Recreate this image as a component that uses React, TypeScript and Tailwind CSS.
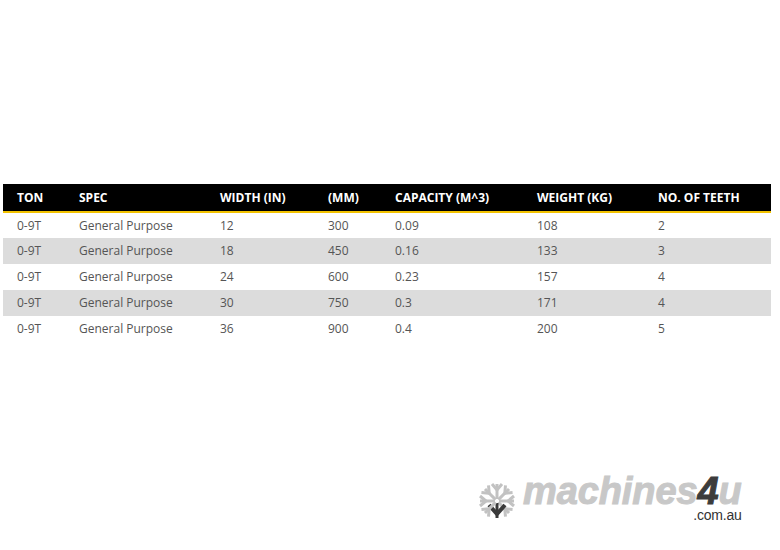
import React from 'react'

const headers = ['TON', 'SPEC', 'WIDTH (IN)', '(MM)', 'CAPACITY (M^3)', 'WEIGHT (KG)', 'NO. OF TEETH']
const widths = ['w-[62px]', 'w-[141px]', 'w-[108px]', 'w-[67px]', 'w-[142px]', 'w-[121px]', 'w-[127px]']

const rows = [
  ['0-9T', 'General Purpose', '12', '300', '0.09', '108', '2'],
  ['0-9T', 'General Purpose', '18', '450', '0.16', '133', '3'],
  ['0-9T', 'General Purpose', '24', '600', '0.23', '157', '4'],
  ['0-9T', 'General Purpose', '30', '750', '0.3', '171', '4'],
  ['0-9T', 'General Purpose', '36', '900', '0.4', '200', '5'],
]

// snowflake mark: 8 spokes with inward chevrons, the bottom one dark
const Star = () => (
  <svg width="38" height="40" viewBox="-19 -20 38 40">
    {[0, 45, 90, 135, 180, 225, 270, 315].map(a => {
      const dark = a === 180
      const c = dark ? '#3a3a3a' : '#c2c2c2'
      return (
        <g key={a} transform={`rotate(${a})`} stroke={c} fill="none" strokeWidth="3">
          <line x1="0" y1="-2" x2="0" y2="-17" />
          {dark ? (
            <polyline points="-8,-4 0,-13 8,-4" strokeWidth="4" />
          ) : (
            <polyline points="-5,-17 0,-11 5,-17" />
          )}
        </g>
      )
    })}
  </svg>
)

export default function App() {
  return (
    <div className="w-[780px] h-[550px] bg-white relative font-['Open_Sans',sans-serif]">
      <div className="pt-[184px] px-[3px] w-[771px]">
        <table className="table-fixed border-collapse w-[768px] text-[12px]">
          <thead>
            <tr className="bg-black h-[28px] border-b-2 border-[#f2c200]">
              {headers.map((h, i) => (
                <th key={h} className={`${widths[i]} text-left font-bold text-white pl-[14px] p-0`}>
                  {h}
                </th>
              ))}
            </tr>
          </thead>
          <tbody>
            {rows.map((r, ri) => (
              <tr key={ri} className={`h-[26px] ${ri % 2 === 1 ? 'bg-[#dcdcdc]' : 'bg-white'}`}>
                {r.map((c, ci) => (
                  <td key={ci} className="pl-[14px] p-0 text-[#555]">
                    {c}
                  </td>
                ))}
              </tr>
            ))}
          </tbody>
        </table>
      </div>
      <div className="absolute left-[478px] top-[481px] flex items-start gap-[7px]">
        <Star />
        <div className="flex flex-col items-end -mt-[5px]">
          <div className="font-['Liberation_Sans',sans-serif] font-bold italic text-[38px] leading-[31px] tracking-[-0.1px] text-[#c8c8c8] [-webkit-text-stroke:1px_#c8c8c8]">
            machines<span className="text-[#3c3c3c] [-webkit-text-stroke:1px_#3c3c3c]">4</span>u
          </div>
          <div className="font-['Liberation_Sans',sans-serif] text-[14px] leading-[14px] text-[#333] tracking-[-0.2px] mt-[1px]">
            .com.au
          </div>
        </div>
      </div>
    </div>
  )
}
